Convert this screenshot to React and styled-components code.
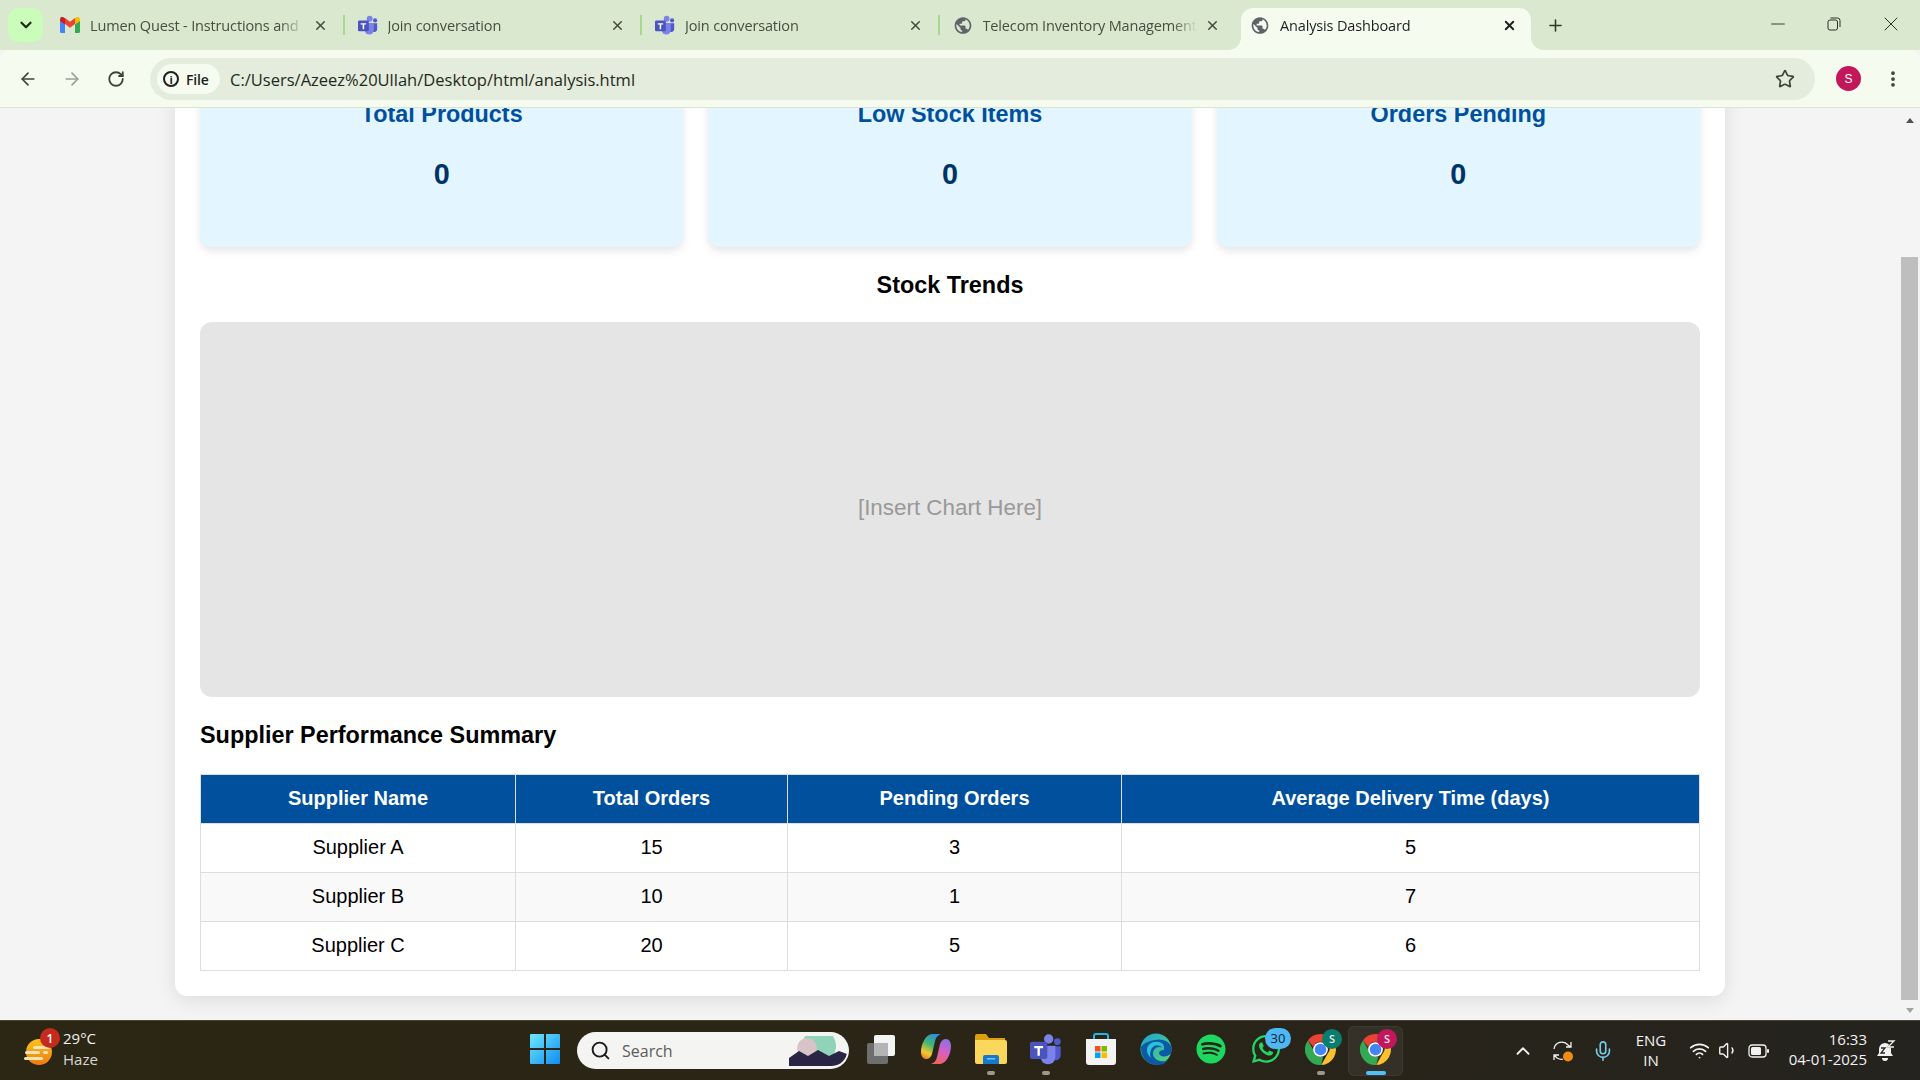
import React from 'react';
import styled, { createGlobalStyle } from 'styled-components';
import { ArrowLeft, ArrowRight, RotateCw, Star, EllipsisVertical, Plus, X, Minus, ChevronDown, ChevronUp, Search, Mic, Wifi, Volume1 } from 'lucide-react';
import { MdPublic } from 'react-icons/md';
import { FaSpotify, FaWhatsapp } from 'react-icons/fa';

const UI_FONT = '"Open Sans", "Noto Sans", sans-serif';
const PAGE_FONT = '"Liberation Sans", Arial, sans-serif';

const GlobalStyle = createGlobalStyle`
    html, body {
        margin: 0;
        padding: 0;
        height: 100%;
        overflow: hidden;
        background: #f4f4f4;
    }
    * { box-sizing: border-box; }
`;

const tabs = [
    { title: 'Lumen Quest - Instructions and', icon: 'gmail' },
    { title: 'Join conversation', icon: 'teams' },
    { title: 'Join conversation', icon: 'teams' },
    { title: 'Telecom Inventory Management', icon: 'globe' },
    { title: 'Analysis Dashboard', icon: 'globe', active: true },
];

const stats = ['Total Products', 'Low Stock Items', 'Orders Pending'];

const suppliers = [
    { name: 'Supplier A', total: 15, pending: 3, time: 5 },
    { name: 'Supplier B', total: 10, pending: 1, time: 7 },
    { name: 'Supplier C', total: 20, pending: 5, time: 6 },
];

function GmailIcon() {
    return (
        <svg width="20" height="16" viewBox="0 0 20 16">
            <path d="M0 3v11.5A1.5 1.5 0 0 0 1.5 16H5V7z" fill="#4285f4" />
            <path d="M15 7v9h3.5a1.5 1.5 0 0 0 1.5-1.500V3z" fill="#34a853" />
            <path d="M5 7l5 3.800L15 7V1l-5 3.800L5 1z" fill="#ea4335" />
            <path d="M0 2.500V4l5 3.500V1.200L3 0C1.500-.6 0 .6 0 2.500z" fill="#c5221f" />
            <path d="M20 2.500V4l-5 3.500V1.200L17 0c1.500-.6 3 .6 3 2.500z" fill="#fbbc04" />
        </svg>
    );
}

function TeamsIcon({ size = 20 }) {
    return (
        <svg width={size} height={size} viewBox="0 0 24 24">
            <circle cx="14" cy="4.500" r="3.500" fill="#7b83eb" />
            <circle cx="20.500" cy="6.500" r="2.500" fill="#5059c9" />
            <path d="M17.500 10H23v7a3.500 3.500 0 0 1-5.500 2.800z" fill="#5059c9" />
            <path d="M8 9.500h11V18a5.500 5.500 0 0 1-11 0z" fill="#7b83eb" />
            <rect x="0" y="6.500" width="13" height="13" rx="1.500" fill="#4b53bc" />
            <path d="M3.200 9.800h6.600v1.600H7.400V17H5.600v-5.600H3.200z" fill="#fff" />
        </svg>
    );
}

function ChromeIcon() {
    return (
        <svg width="31" height="31" viewBox="4 4 40 40">
            <path d="M24 4a20 20 0 0 1 17.300 10H24a10 10 0 0 0-9.400 6.500L7.800 12.300A20 20 0 0 1 24 4z" fill="#ea4335" />
            <path d="M41.300 14A20 20 0 0 1 25 44l8.300-15A10 10 0 0 0 32 14z" fill="#fbc02d" />
            <path d="M7.800 12.300l8.600 15a10 10 0 0 0 11 6.200L25 44A20 20 0 0 1 7.800 12.300z" fill="#34a853" />
            <circle cx="24" cy="24" r="9.500" fill="#fff" />
            <circle cx="24" cy="24" r="7.500" fill="#4285f4" />
        </svg>
    );
}

function WeatherIcon() {
    return (
        <svg width="30" height="30" viewBox="0 0 30 30">
            <defs>
                <linearGradient id="sunFill" x1="0" y1="0" x2="0" y2="1">
                    <stop offset="0" stopColor="#fcc419" />
                    <stop offset="1" stopColor="#ee7a12" />
                </linearGradient>
            </defs>
            <circle cx="15" cy="15" r="13" fill="url(#sunFill)" />
            <g fill="#f8e3b4">
                <rect x="9" y="9" width="17" height="3" rx="1.500" />
                <rect x="1" y="14" width="15" height="3" rx="1.500" />
                <rect x="19" y="14" width="5" height="3" rx="1.500" />
                <rect x="0" y="20" width="19" height="3" rx="1.500" />
            </g>
        </svg>
    );
}

function WindowsIcon() {
    return (
        <svg width="30" height="30" viewBox="0 0 30 30">
            <defs>
                <linearGradient id="winFill" x1="0" y1="0" x2="1" y2="1">
                    <stop offset="0" stopColor="#6fe9fb" />
                    <stop offset="1" stopColor="#0f8cf5" />
                </linearGradient>
            </defs>
            <path d="M0 1a1 1 0 0 1 1-1h13v14H0zM16 0h13a1 1 0 0 1 1 1v13H16zM0 16h14v14H1a1 1 0 0 1-1-1zM16 16h14v13a1 1 0 0 1-1 1H16z" fill="url(#winFill)" />
        </svg>
    );
}

function TaskViewIcon() {
    return (
        <svg width="30" height="30" viewBox="0 0 30 30">
            <rect x="1" y="9" width="21" height="21" rx="2" fill="#6e6e6e" />
            <rect x="8" y="1" width="21" height="21" rx="2" fill="#f4f4f4" />
            <rect x="8" y="9" width="14" height="13" fill="#b4b4b4" />
        </svg>
    );
}

function CopilotIcon() {
    return (
        <svg width="32" height="32" viewBox="0 0 32 32">
            <defs>
                <linearGradient id="copA" x1="0.7" y1="0" x2="0.3" y2="1">
                    <stop offset="0" stopColor="#2a8fe0" />
                    <stop offset=".45" stopColor="#46b66c" />
                    <stop offset=".8" stopColor="#f7c82c" />
                    <stop offset="1" stopColor="#e88a2e" />
                </linearGradient>
                <linearGradient id="copB" x1="0.7" y1="0" x2="0.3" y2="1">
                    <stop offset="0" stopColor="#8f6fe8" />
                    <stop offset=".5" stopColor="#d95fc0" />
                    <stop offset="1" stopColor="#f2645a" />
                </linearGradient>
            </defs>
            <path d="M12 1h9c-3 1-5 3-6 7l-3 13c-1 3-3 5-6 5-3 0-5-3-5-7C1 11 6 1 12 1z" fill="url(#copA)" />
            <path d="M20 31h-9c3-1 5-3 6-7l3-13c1-3 3-5 6-5 3 0 5 3 5 7 0 8-5 18-11 18z" fill="url(#copB)" />
        </svg>
    );
}

function ExplorerIcon() {
    return (
        <svg width="32" height="30" viewBox="0 0 32 30">
            <path d="M0 2a2 2 0 0 1 2-2h9l3 4h16v6H0z" fill="#dba010" />
            <path d="M0 6h30a2 2 0 0 1 2 2v20a2 2 0 0 1-2 2H2a2 2 0 0 1-2-2z" fill="#fbd75b" />
            <path d="M8 23a2 2 0 0 1 2-2h12a2 2 0 0 1 2 2v7H8z" fill="#1479cf" />
            <rect x="12" y="24" width="8" height="1.500" fill="#7cc4f5" />
        </svg>
    );
}

function StoreIcon() {
    return (
        <svg width="30" height="32" viewBox="0 0 30 32">
            <path d="M8 7V3a2 2 0 0 1 2-2h10a2 2 0 0 1 2 2v4" fill="none" stroke="#22b5e8" strokeWidth="2" />
            <path d="M0 6h30v23a3 3 0 0 1-3 3H3a3 3 0 0 1-3-3z" fill="#f3f3f3" />
            <rect x="9" y="13" width="5.500" height="5.500" fill="#f25022" />
            <rect x="15.500" y="13" width="5.500" height="5.500" fill="#7fba00" />
            <rect x="9" y="19.500" width="5.500" height="5.500" fill="#00a4ef" />
            <rect x="15.500" y="19.500" width="5.500" height="5.500" fill="#ffb900" />
        </svg>
    );
}

function EdgeIcon() {
    return (
        <svg width="32" height="32" viewBox="0 0 32 32">
            <defs>
                <linearGradient id="edgeTop" x1="0" y1="0" x2="1" y2="1">
                    <stop offset="0" stopColor="#1ba2d8" />
                    <stop offset="1" stopColor="#5ad66e" />
                </linearGradient>
            </defs>
            <circle cx="16" cy="16" r="15.500" fill="url(#edgeTop)" />
            <path d="M1 15C1 26 9 32 17 32c5 0 9-2 11-5-4 2-11 2-14-3-2-3-1-7 2-9 3-2 8-1 8 2-3 0-5 1-5 3 0 3 4 4 8 3 3-1 5-3 5-6C32 9 22 5 15 7 7 8 1 12 1 15z" fill="#0c59a4" />
            <path d="M14 13c-3 2-5 7-3 12-2-2-4-4-4-8 0-6 6-9 11-8 3 0 7 2 6 8-1-3-6-6-10-4z" fill="#2bc1d8" />
        </svg>
    );
}

function SyncIcon() {
    return (
        <svg width="22" height="22" viewBox="0 0 22 22" fill="none" stroke="#f2f2f2" strokeWidth="1.300">
            <path d="M2 9a8 8 0 0 1 14-4l3 2M19 2v5h-5" />
            <path d="M2 20v-5h5M2 15l3 3c2 1 4 2 6 1" />
            <circle cx="16" cy="16.500" r="5" fill="#f28c13" stroke="none" />
        </svg>
    );
}

function BatteryIcon() {
    return (
        <svg width="22" height="14" viewBox="0 0 22 14">
            <rect x="1" y="1" width="17" height="12" rx="3" fill="none" stroke="#f2f2f2" strokeWidth="1.300" />
            <rect x="3" y="3" width="10" height="8" rx="1.500" fill="#f2f2f2" />
            <rect x="19" y="5" width="2" height="4" rx="1" fill="#f2f2f2" />
        </svg>
    );
}

function BellIcon() {
    return (
        <svg width="20" height="22" viewBox="0 0 20 22">
            <path d="M9 3a6 6 0 0 1 6 6v4l2 3H1l2-3V9a6 6 0 0 1 6-6z" fill="#f2f2f2" />
            <path d="M6 18h6a3 3 0 0 1-6 0z" fill="#f2f2f2" />
            <path d="M5 8h4l-4 5h4M12 1h5l-5 6h5" fill="none" stroke="#2a2620" strokeWidth="1.300" />
            <path d="M12 1h6l-6 6h6" fill="none" stroke="#f2f2f2" strokeWidth="1.300" />
        </svg>
    );
}

function RestoreIcon() {
    return (
        <svg width="14" height="14" viewBox="0 0 14 14" fill="none" stroke="#2c3327" strokeWidth="1">
            <rect x="1" y="3" width="9.500" height="10" rx="2" />
            <path d="M3.500 1h7A2.500 2.500 0 0 1 13 3.500V10" />
        </svg>
    );
}

function TabIcon({ kind }) {
    if (kind === 'gmail') return <GmailIcon />;
    if (kind === 'teams') return <TeamsIcon />;
    return <MdPublic size={23} color="#5f6368" />;
}

function TabStrip() {
    return (
        <Strip>
            <TabSearch><ChevronDown size={18} strokeWidth={3} color="#1f2a1a" /></TabSearch>
            {tabs.map((tab, i) => (
                <Tab key={i} $active={tab.active} $sep={i < 3}>
                    <TabIconBox><TabIcon kind={tab.icon} /></TabIconBox>
                    <TabTitle $active={tab.active}>{tab.title}</TabTitle>
                    <TabClose $active={tab.active}><X size={15} strokeWidth={tab.active ? 3 : 2.500} /></TabClose>
                </Tab>
            ))}
            <NewTab><Plus size={19} strokeWidth={2} color="#2f3a29" /></NewTab>
            <WindowControls>
                <WindowButton><Minus size={22} strokeWidth={1} color="#2c3327" /></WindowButton>
                <WindowButton><RestoreIcon /></WindowButton>
                <WindowButton><X size={24} strokeWidth={1} color="#2c3327" /></WindowButton>
            </WindowControls>
        </Strip>
    );
}

function Toolbar() {
    return (
        <ToolbarRow>
            <NavButton><ArrowLeft size={20} strokeWidth={2} color="#3c4438" /></NavButton>
            <NavButton><ArrowRight size={20} strokeWidth={2} color="#9aa096" /></NavButton>
            <NavButton><RotateCw size={18} strokeWidth={2.400} color="#3c4438" /></NavButton>
            <AddressBar>
                <FileChip>
                    <InfoGlyph>i</InfoGlyph>
                    File
                </FileChip>
                <Url>C:/Users/Azeez%20Ullah/Desktop/html/analysis.html</Url>
                <StarBox><Star size={20} strokeWidth={2} color="#3c4438" /></StarBox>
            </AddressBar>
            <Avatar>S</Avatar>
            <MenuBox><EllipsisVertical size={20} strokeWidth={2.500} color="#3c4438" /></MenuBox>
        </ToolbarRow>
    );
}

function Dashboard() {
    return (
        <Card>
            <StatRow>
                {stats.map((label) => (
                    <Stat key={label}>
                        <StatLabel>{label}</StatLabel>
                        <StatValue>0</StatValue>
                    </Stat>
                ))}
            </StatRow>
            <ChartTitle>Stock Trends</ChartTitle>
            <ChartBox>[Insert Chart Here]</ChartBox>
            <SectionTitle>Supplier Performance Summary</SectionTitle>
            <Table>
                <colgroup>
                    <Col $w={315} />
                    <Col $w={272} />
                    <Col $w={334} />
                    <col />
                </colgroup>
                <thead>
                    <tr>
                        <Th>Supplier Name</Th>
                        <Th>Total Orders</Th>
                        <Th>Pending Orders</Th>
                        <Th>Average Delivery Time (days)</Th>
                    </tr>
                </thead>
                <tbody>
                    {suppliers.map((row) => (
                        <Row key={row.name}>
                            <Td>{row.name}</Td>
                            <Td>{row.total}</Td>
                            <Td>{row.pending}</Td>
                            <Td>{row.time}</Td>
                        </Row>
                    ))}
                </tbody>
            </Table>
        </Card>
    );
}

function Taskbar() {
    return (
        <Bar>
            <Weather>
                <WeatherBox>
                    <WeatherIcon />
                    <WeatherBadge>1</WeatherBadge>
                </WeatherBox>
                <WeatherText>
                    <span>29°C</span>
                    <WeatherSub>Haze</WeatherSub>
                </WeatherText>
            </Weather>
            <Center>
                <AppTile><WindowsIcon /></AppTile>
                <SearchPill>
                    <Search size={21} strokeWidth={2.200} color="#1c1c1c" />
                    <SearchText>Search</SearchText>
                    <SearchArt viewBox="0 0 58 30">
                        <circle cx="30" cy="10" r="17" fill="#8fd3b8" />
                        <circle cx="18" cy="12" r="10" fill="#d8c4c8" />
                        <path d="M0 30V22l10-7 9 5 10-6 11 6 10-5 8 3v12z" fill="#2b2545" />
                    </SearchArt>
                </SearchPill>
                <AppTile $ml={4}><TaskViewIcon /></AppTile>
                <AppTile><CopilotIcon /></AppTile>
                <AppTile $dot><ExplorerIcon /></AppTile>
                <AppTile $dot><TeamsIcon size={32} /></AppTile>
                <AppTile><StoreIcon /></AppTile>
                <AppTile><EdgeIcon /></AppTile>
                <AppTile><FaSpotify size={30} color="#1ed760" /></AppTile>
                <AppTile>
                    <FaWhatsapp size={32} color="#25d366" />
                    <CountBadge>30</CountBadge>
                </AppTile>
                <AppTile $dot>
                    <ChromeIcon />
                    <ProfileBadge $color="#0b7d6e">S</ProfileBadge>
                </AppTile>
                <AppTile $current>
                    <ChromeIcon />
                    <ProfileBadge $color="#c2185b">S</ProfileBadge>
                </AppTile>
            </Center>
            <Tray>
                <TrayItem $w={40}><ChevronUp size={22} strokeWidth={2} color="#f2f2f2" /></TrayItem>
                <TrayItem $w={40}><SyncIcon /></TrayItem>
                <TrayItem $w={40}><Mic size={22} strokeWidth={1.800} color="#74cbe8" /></TrayItem>
                <LangBox>
                    <span>ENG</span>
                    <span>IN</span>
                </LangBox>
                <TrayItem $w={29} $ml={14}><Wifi size={21} strokeWidth={2} color="#f2f2f2" /></TrayItem>
                <TrayItem $w={29}><Volume1 size={21} strokeWidth={1.600} color="#f2f2f2" /></TrayItem>
                <TrayItem $w={32}><BatteryIcon /></TrayItem>
                <Clock>
                    <span>16:33</span>
                    <span>04-01-2025</span>
                </Clock>
                <TrayItem $w={22} $ml={8}><BellIcon /></TrayItem>
            </Tray>
        </Bar>
    );
}

export default function App() {
    return (
        <>
            <GlobalStyle />
            <Screen>
                <TabStrip />
                <Toolbar />
                <Viewport>
                    <ScrollArea>
                        <Dashboard />
                    </ScrollArea>
                    <Scrollbar>
                        <ScrollArrow $up />
                        <ScrollTrack><ScrollThumb /></ScrollTrack>
                        <ScrollArrow />
                    </Scrollbar>
                </Viewport>
                <Taskbar />
            </Screen>
        </>
    );
}

const Screen = styled.div`
    width: 1920px;
    height: 1080px;
    display: flex;
    flex-direction: column;
    overflow: hidden;
    font-family: ${UI_FONT};
`;

const Strip = styled.div`
    height: 50px;
    flex: none;
    display: flex;
    align-items: flex-end;
    background: #d9e8cf;
    padding-left: 8px;
`;

const TabSearch = styled.div`
    width: 35px;
    height: 34px;
    margin: 0 4px 8px 0;
    flex: none;
    display: flex;
    align-items: center;
    justify-content: center;
    border-radius: 10px;
    background: #c9fdb9;
`;

const Tab = styled.div`
    position: relative;
    width: ${props => props.$active ? "290px" : "297.500px"};
    margin: 0 ${props => props.$active ? "3.750px" : "0"};
    height: 42px;
    flex: none;
    display: flex;
    align-items: center;
    padding: 0 ${props => props.$active ? "9px" : "12.500px"} 8px ${props => props.$active ? "9.250px" : "13px"};
    border-radius: 12px 12px 0 0;
    background: ${props => props.$active ? "#f6fbf0" : "transparent"};
    &::after {
        content: "";
        display: ${props => props.$sep ? "block" : "none"};
        position: absolute;
        right: 0;
        top: 7px;
        width: 2px;
        height: 20px;
        background: #a6d98f;
    }
    &::before {
        content: "";
        display: ${props => props.$active ? "block" : "none"};
        position: absolute;
        bottom: 0;
        left: -12px;
        right: -12px;
        height: 12px;
        z-index: 0;
        background:
            radial-gradient(circle at 0 0, #d9e8cf 11.500px, #f6fbf0 12px) left bottom / 12px 12px no-repeat,
            radial-gradient(circle at 100% 0, #d9e8cf 11.500px, #f6fbf0 12px) right bottom / 12px 12px no-repeat;
    }
`;

const TabIconBox = styled.div`
    width: 20px;
    height: 24px;
    flex: none;
    display: flex;
    align-items: center;
    justify-content: center;
    margin-right: 10px;
    position: relative;
    z-index: 1;
`;

const TabTitle = styled.div`
    flex: 1;
    min-width: 0;
    white-space: nowrap;
    overflow: hidden;
    font-size: 14.500px;
    letter-spacing: -0.15px;
    color: ${props => props.$active ? "#1f1f1f" : "#474f41"};
    mask-image: linear-gradient(to right, #000 calc(100% - 24px), transparent);
`;

const TabClose = styled.div`
    width: 24px;
    flex: none;
    display: flex;
    justify-content: center;
    margin-left: 4px;
    color: ${props => props.$active ? "#1f1f1f" : "#474f41"};
`;

const NewTab = styled.div`
    width: 24px;
    height: 42px;
    margin-left: 9px;
    padding-bottom: 8px;
    display: flex;
    align-items: center;
    justify-content: center;
`;

const WindowControls = styled.div`
    margin-left: auto;
    align-self: stretch;
    display: flex;
    align-items: center;
    padding: 0 1px 2px 0;
`;

const WindowButton = styled.div`
    width: 56.500px;
    display: flex;
    justify-content: center;
`;

const ToolbarRow = styled.div`
    position: relative;
    height: 58px;
    flex: none;
    display: flex;
    align-items: center;
    padding: 1px 0 0 6px;
    background: #f6fbf0;
    border-bottom: 1px solid #dbe4d2;
    border-radius: 10px 10px 0 0;
`;

const NavButton = styled.div`
    width: 44.200px;
    display: flex;
    justify-content: center;
    flex: none;
`;

const AddressBar = styled.div`
    width: 1665px;
    height: 42px;
    margin-left: 11.500px;
    flex: none;
    display: flex;
    align-items: center;
    padding-left: 7px;
    background: #e4ecdd;
    border-radius: 21px;
`;

const FileChip = styled.div`
    width: 63px;
    height: 30px;
    flex: none;
    display: flex;
    align-items: center;
    gap: 7px;
    padding-left: 6px;
    background: #f6fbf0;
    border-radius: 15px;
    font-size: 14px;
    font-weight: 600;
    letter-spacing: -0.2px;
    color: #1f1f1f;
`;

const InfoGlyph = styled.span`
    width: 16px;
    height: 16px;
    flex: none;
    display: flex;
    align-items: center;
    justify-content: center;
    border: 2px solid #1f1f1f;
    border-radius: 50%;
    font-size: 11px;
    font-weight: 700;
    line-height: 1;
`;

const Url = styled.div`
    margin-left: 10px;
    font-size: 16.500px;
    color: #1f2a1a;
    white-space: nowrap;
`;

const StarBox = styled.div`
    margin-left: auto;
    margin-right: 20px;
    display: flex;
`;

const Avatar = styled.div`
    width: 25px;
    height: 25px;
    margin: -1px 0 0 21px;
    flex: none;
    display: flex;
    align-items: center;
    justify-content: center;
    border-radius: 50%;
    background: #c2185b;
    color: #fff;
    font-family: ${PAGE_FONT};
    font-size: 12px;
`;

const MenuBox = styled.div`
    margin-left: 22px;
    display: flex;
`;

const Viewport = styled.div`
    flex: 1;
    min-height: 0;
    display: flex;
    background: #f4f4f4;
    font-family: ${PAGE_FONT};
`;

const ScrollArea = styled.div`
    flex: 1;
    min-width: 0;
    overflow: hidden;
`;

const Card = styled.div`
    width: 1550px;
    margin: -53px auto 0;
    padding: 25px 25px;
    background: #fff;
    border-radius: 12px;
    box-shadow: 0 4px 20px rgba(0, 0, 0, 0.1);
`;

const StatRow = styled.div`
    display: flex;
    gap: 25px;
`;

const Stat = styled.div`
    flex: 1;
    height: 167px;
    padding-top: 20px;
    text-align: center;
    background: #e3f6ff;
    border-radius: 12px;
    box-shadow: 0 4px 8px rgba(0, 0, 0, 0.1);
`;

const StatLabel = styled.h3`
    margin: 0 0 30px;
    font-size: 23.400px;
    line-height: 28px;
    font-weight: 700;
    color: #00509d;
`;

const StatValue = styled.p`
    margin: 0;
    font-size: 28.800px;
    line-height: 32px;
    font-weight: 700;
    color: #003366;
`;

const ChartTitle = styled.h2`
    margin: 24px 0 23px;
    font-size: 23.400px;
    line-height: 28px;
    font-weight: 700;
    text-align: center;
    color: #000;
`;

const ChartBox = styled.div`
    height: 375px;
    padding-bottom: 3px;
    display: flex;
    align-items: center;
    justify-content: center;
    background: #e5e5e5;
    border-radius: 12px;
    font-size: 22.400px;
    color: #999;
`;

const SectionTitle = styled.h2`
    margin: 24px 0 25px;
    font-size: 23.400px;
    line-height: 28px;
    font-weight: 700;
    color: #000;
`;

const Table = styled.table`
    width: 100%;
    table-layout: fixed;
    border-collapse: collapse;
    font-size: 20px;
    color: #000;
`;

const Col = styled.col`
    width: ${props => props.$w}px;
`;

const Th = styled.th`
    height: 49px;
    padding: 0 0 2px;
    border: 1px solid #ddd;
    background: #00509d;
    color: #fff;
    font-weight: 700;
    text-align: center;
`;

const Row = styled.tr`
    &:nth-child(even) {
        background: #f9f9f9;
    }
`;

const Td = styled.td`
    height: 49px;
    padding: 0 0 2px;
    border: 1px solid #ddd;
    text-align: center;
`;

const Scrollbar = styled.div`
    width: 20px;
    flex: none;
    display: flex;
    flex-direction: column;
    padding: 0 2px 0 1px;
    background: #f4f4f4;
`;

const ScrollArrow = styled.div`
    height: 20px;
    flex: none;
    display: flex;
    align-items: center;
    justify-content: center;
    padding-top: ${props => props.$up ? "4px" : "0"};
    &::before {
        content: "";
        border-left: 4.500px solid transparent;
        border-right: 4.500px solid transparent;
        ${props => props.$up ? "border-bottom: 5px solid #505050;" : "border-top: 5px solid #a3a3a3;"}
    }
`;

const ScrollTrack = styled.div`
    flex: 1;
    padding-top: 129px;
`;

const ScrollThumb = styled.div`
    height: 100%;
    background: #bebebe;
`;

const Bar = styled.div`
    height: 60px;
    flex: none;
    display: flex;
    align-items: center;
    background: linear-gradient(to right, #2c2614, #2a2516 50%, #25231f);
    border-top: 1px solid #4a4636;
    color: #f2f2f2;
    font-size: 15px;
`;

const Weather = styled.div`
    width: 517px;
    flex: none;
    display: flex;
    align-items: center;
    padding-left: 24px;
    gap: 9px;
`;

const WeatherBox = styled.div`
    position: relative;
    display: flex;
    margin-top: 3px;
`;

const WeatherBadge = styled.span`
    position: absolute;
    top: -9px;
    right: -6px;
    width: 20px;
    height: 20px;
    display: flex;
    align-items: center;
    justify-content: center;
    border-radius: 50%;
    background: #c42b1c;
    color: #fff;
    font-size: 12px;
    font-weight: 600;
`;

const WeatherText = styled.div`
    display: flex;
    flex-direction: column;
    margin-bottom: 4px;
    font-size: 15px;
    line-height: 21px;
`;

const WeatherSub = styled.span`
    color: #d6d6d0;
`;

const Center = styled.div`
    width: 910px;
    flex: none;
    display: flex;
    align-items: center;
`;

const AppTile = styled.div`
    position: relative;
    width: 55px;
    height: 50px;
    flex: none;
    display: flex;
    align-items: center;
    justify-content: center;
    padding-bottom: 3px;
    margin-left: ${props => props.$ml || 0}px;
    border-radius: 6px;
    ${props => props.$current && "background: rgba(255, 255, 255, 0.06); box-shadow: inset 0 0 0 1px rgba(255, 255, 255, 0.05);"}
    &::after {
        content: "";
        display: ${props => props.$dot || props.$current ? "block" : "none"};
        position: absolute;
        bottom: 1px;
        left: 50%;
        transform: translateX(-50%);
        width: ${props => props.$current ? "20px" : "8px"};
        height: 4px;
        border-radius: 2px;
        background: ${props => props.$current ? "#4fc3f7" : "#9c9a90"};
    }
`;

const SearchPill = styled.div`
    width: 272px;
    height: 37px;
    margin-left: 5px;
    flex: none;
    display: flex;
    align-items: center;
    padding-left: 13px;
    background: #f4f4f2;
    border-radius: 19px;
    overflow: hidden;
`;

const SearchText = styled.span`
    margin-left: 11px;
    font-size: 16px;
    color: #5c5c5c;
`;

const SearchArt = styled.svg`
    width: 58px;
    height: 30px;
    margin-left: auto;
    margin-right: 2px;
    border-radius: 0 16px 16px 0;
`;

const CountBadge = styled.span`
    position: absolute;
    top: 2px;
    right: 2px;
    width: 26px;
    height: 21px;
    display: flex;
    align-items: center;
    justify-content: center;
    border-radius: 11px;
    background: #4db8f5;
    color: #10222c;
    font-size: 13px;
`;

const ProfileBadge = styled.span`
    position: absolute;
    top: 3px;
    right: 6px;
    width: 20px;
    height: 20px;
    display: flex;
    align-items: center;
    justify-content: center;
    border-radius: 50%;
    background: ${props => props.$color};
    color: #e8e8e8;
    font-size: 11px;
    font-weight: 600;
`;

const Tray = styled.div`
    flex: 1;
    display: flex;
    align-items: center;
    padding-left: 76px;
`;

const TrayItem = styled.div`
    width: ${props => props.$w}px;
    margin-left: ${props => props.$ml || 0}px;
    flex: none;
    display: flex;
    justify-content: center;
`;

const LangBox = styled.div`
    width: 40px;
    margin: 0 0 2px 8px;
    flex: none;
    display: flex;
    flex-direction: column;
    align-items: center;
    font-size: 15px;
    line-height: 20px;
`;

const Clock = styled.div`
    width: 90px;
    margin: 0 0 4px 2px;
    flex: none;
    display: flex;
    flex-direction: column;
    align-items: flex-end;
    font-size: 15px;
    line-height: 20px;
`;
